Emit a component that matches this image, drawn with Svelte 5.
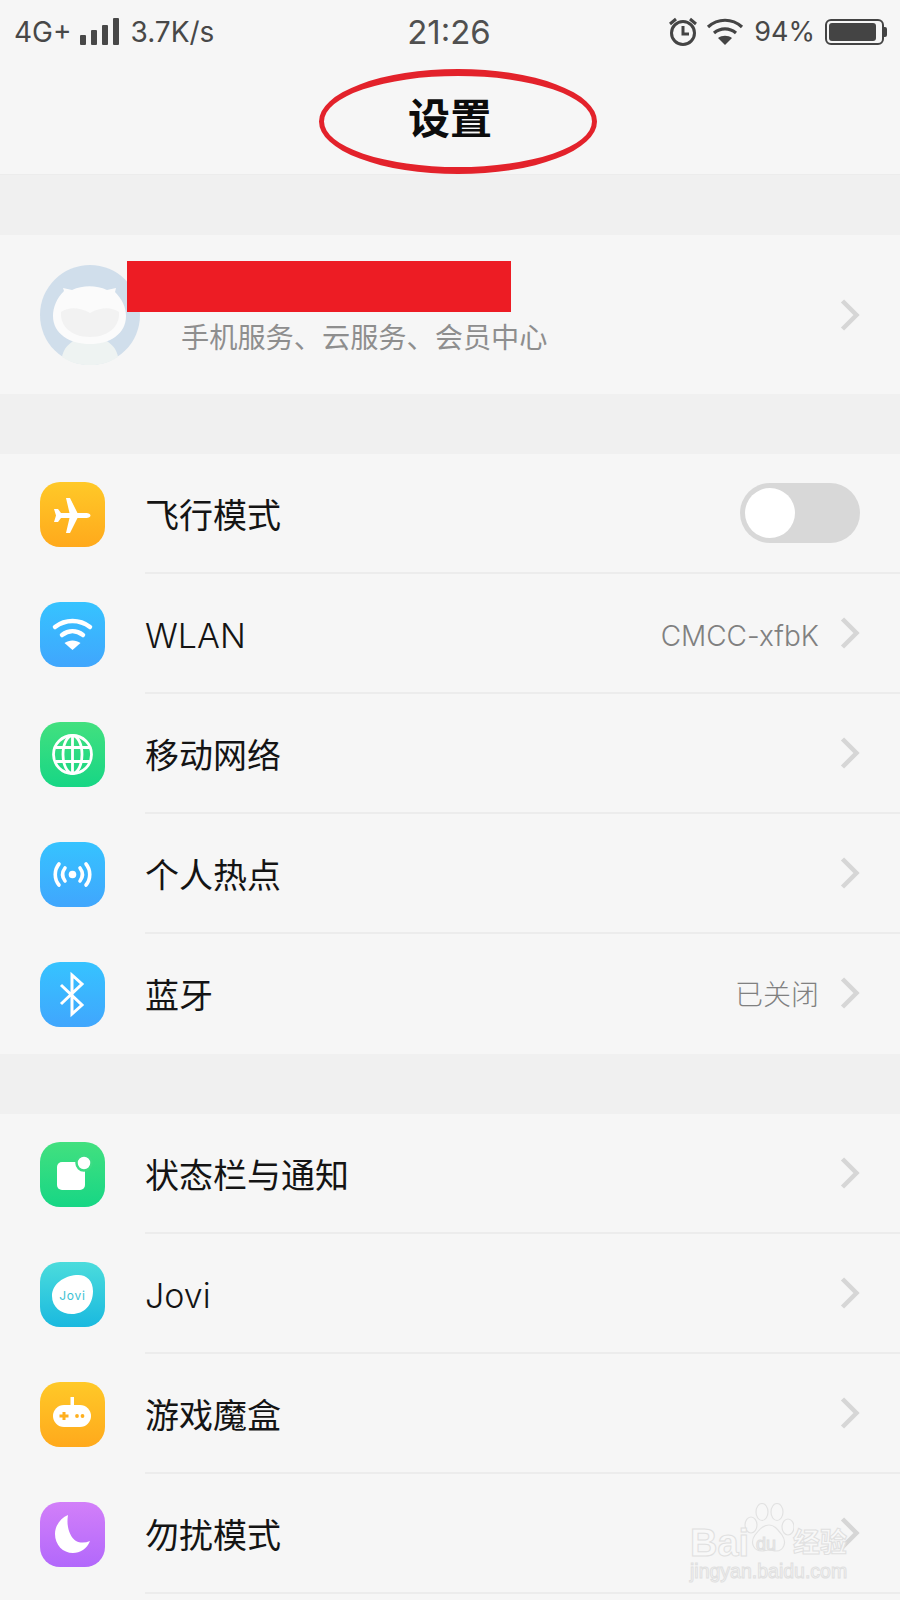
<script lang="ts">
  const group1 = [
    { id: 'plane', label: '飞行模式', toggle: true },
    { id: 'wifi', label: 'WLAN', value: 'CMCC-xfbK' },
    { id: 'globe', label: '移动网络' },
    { id: 'hotspot', label: '个人热点' },
    { id: 'bt', label: '蓝牙', value: '已关闭', end: true }
  ];
  const group2 = [
    { id: 'status', label: '状态栏与通知' },
    { id: 'jovi', label: 'Jovi' },
    { id: 'game', label: '游戏魔盒' },
    { id: 'moon', label: '勿扰模式' }
  ];
  const tones: Record<string, string> = {
    plane: 'orange',
    wifi: 'blue',
    globe: 'green',
    hotspot: 'blue',
    bt: 'blue',
    status: 'green',
    jovi: 'teal',
    game: 'orange',
    moon: 'purple'
  };
  // Inter sits higher in the line than the CJK face, nudge latin strings down
  const isLatin = (s: string) => /^[A-Za-z]/.test(s);
</script>

{#snippet glyph(id: string)}
  <svg viewBox="0 0 65 65" width="65" height="65" aria-hidden="true">
    {#if id === 'plane'}
      <path fill="#fff" d="M50.500 33.500c0 1.500-2 2.500-4 2.500H37.500L30 51h-4l3.500-15H21l-3 4h-4l2-6.500-2-6.500h4l3 4h8.500L26 16h4l7.500 15h9c2 0 4 1 4 2.500z"/>
    {:else if id === 'wifi'}
      <g fill="none" stroke="#fff" stroke-width="4.500" stroke-linecap="round">
        <path d="M15 25c10.500-8 24.500-8 35 0"/>
        <path d="M22 33c6.500-5 14.500-5 21 0"/>
      </g>
      <path fill="#fff" d="M32.500 48l-8-7c4.500-3.500 11.500-3.500 16 0z"/>
    {:else if id === 'globe'}
      <g fill="none" stroke="#fff" stroke-width="2.800">
        <circle cx="32.500" cy="32.500" r="19"/>
        <ellipse cx="32.500" cy="32.500" rx="9.500" ry="19"/>
        <path d="M32.500 13.500v38M15.500 25.500h34M15.500 39.500h34"/>
      </g>
    {:else if id === 'hotspot'}
      <g fill="none" stroke="#fff" stroke-width="3.600" stroke-linecap="round">
        <path d="M19 22c-5 6-5 15 0 21"/>
        <path d="M25 26c-3 4-3 9 0 13"/>
        <path d="M46 22c5 6 5 15 0 21"/>
        <path d="M40 26c3 4 3 9 0 13"/>
      </g>
      <circle cx="32.500" cy="32.500" r="3.800" fill="#fff"/>
    {:else if id === 'bt'}
      <path fill="none" stroke="#fff" stroke-width="3" d="M21 23l21 20-10 9V13l10 9-21 20"/>
    {:else if id === 'status'}
      <rect x="17" y="20" width="28" height="28" rx="5" fill="#fff"/>
      <circle cx="44" cy="21" r="7.500" fill="#fff" stroke="#3ddc84" stroke-width="2.500"/>
    {:else if id === 'jovi'}
      <path fill="#fff" d="M12 34c0-12 12-20 24-21 10-1 17 5 17 16 0 14-9 23-21 23-11 0-20-7-20-18z"/>
      <text x="32.500" y="38" class="jovi-mark">Jovi</text>
    {:else if id === 'game'}
      <path fill="#fff" d="M30.500 15h3.500v10h-3.500z"/>
      <rect x="13" y="23" width="38" height="22" rx="11" fill="#fff"/>
      <path fill="#ffb01f" d="M22.500 30h3v2.500h3v3h-3v2.500h-3v-2.500h-3v-3h3z"/>
      <circle cx="37" cy="34" r="1.900" fill="#ffb01f"/>
      <circle cx="42.500" cy="34" r="1.900" fill="#ffb01f"/>
    {:else if id === 'moon'}
      <path fill="#fff" d="M28 13c-2 12 2 22 8 26 4 2 9 2 14 0-3 8-10 12-17 12-10 0-18-8-18-19 0-9 6-16 13-19z"/>
    {/if}
  </svg>
{/snippet}

{#snippet chevron()}
  <svg class="chevron" viewBox="0 0 20 32" width="20" height="32" aria-hidden="true">
    <path d="M2.500 2l14 14-14 14" fill="none" stroke="#d6d6d6" stroke-width="4.500"/>
  </svg>
{/snippet}

{#snippet rows(items: any[])}
  <div class="group">
    {#each items as item}
      <div class="row">
        <div class="icon {tones[item.id]}">{@render glyph(item.id)}</div>
        <div class="row-body" class:end={item.end}>
          <span class="label" class:latin={isLatin(item.label)}>{item.label}</span>
          {#if item.toggle}
            <div class="toggle"><span class="knob"></span></div>
          {:else}
            {#if item.value}<span class="value" class:latin={isLatin(item.value)}>{item.value}</span>{/if}
            {@render chevron()}
          {/if}
        </div>
      </div>
    {/each}
  </div>
{/snippet}

<div class="page">
  <header class="status">
    <div class="status-left">
      <span class="net">4G+</span>
      <div class="signal"><i></i><i></i><i></i><i></i></div>
      <span class="speed">3.7K/s</span>
    </div>
    <span class="clock">21:26</span>
    <div class="status-right">
      <svg width="30" height="29" viewBox="0 0 30 29" aria-hidden="true">
        <g fill="none" stroke="#444" stroke-width="3">
          <circle cx="15" cy="16" r="11.500"/>
          <path d="M15 9v8h6"/>
          <path d="M2 7l6-5M28 7l-6-5"/>
        </g>
      </svg>
      <svg class="st-wifi" width="38" height="27" viewBox="0 0 38 27" aria-hidden="true">
        <g fill="none" stroke="#444" stroke-width="3.200">
          <path d="M2 9c10-9 24-9 34 0"/>
          <path d="M8 15c6.500-5.500 15.500-5.500 22 0"/>
        </g>
        <path fill="#444" d="M19 27l-7-7c4-3 10-3 14 0z"/>
      </svg>
      <span class="pct">94%</span>
      <div class="battery"><span class="fill"></span></div>
    </div>
  </header>

  <div class="title-bar">
    <h1>设置</h1>
  </div>

  <div class="band first"></div>

  <section class="profile">
    <svg class="avatar" viewBox="0 0 100 100" width="100" height="100" aria-hidden="true">
      <circle cx="50" cy="50" r="50" fill="#d0deeb"/>
      <path fill="#eef3f2" d="M22 92c2-12 13-20 28-20s26 8 28 20c-16 11-40 11-56 0z"/>
      <path fill="#fbfbfb" d="M24 26l-1-3 9 2c11-5 24-5 35 0l9-2-1 4c7 7 11 15 11 24 0 18-16 28-36 28S13 69 13 51c0-9 4-18 11-25z"/>
      <path fill="#f2f2f2" d="M21 47c8-5 18-5 29 1 11-6 21-6 29-1 1 14-10 25-29 25S20 61 21 47z"/>
    </svg>
    <div class="profile-text">手机服务、云服务、会员中心</div>
    {@render chevron()}
    <div class="redact"></div>
  </section>

  <div class="band"></div>

  {@render rows(group1)}

  <div class="band"></div>

  {@render rows(group2)}

  <div class="circle-mark"></div>

  <div class="watermark">
    <svg class="paw" viewBox="0 0 50 52" width="50" height="52" aria-hidden="true">
      <g fill="#f7f7f7" stroke="#e2e2e2" stroke-width="1.200">
        <ellipse cx="7" cy="22" rx="6" ry="8"/>
        <ellipse cx="18" cy="9" rx="6" ry="8.500"/>
        <ellipse cx="33" cy="9" rx="6" ry="8.500"/>
        <ellipse cx="44" cy="24" rx="6" ry="8"/>
        <path d="M25 22c6 0 9 5 13 10 5 7 2 16-6 16-3 0-4-1-7-1s-4 1-7 1c-9 0-12-9-7-16 4-5 8-10 14-10z"/>
      </g>
    </svg>
    <span class="wm-bai">Bai</span>
    <span class="wm-du">du</span>
    <span class="wm-cn">经验</span>
    <span class="wm-url">jingyan.baidu.com</span>
  </div>
</div>

<style>
  :global(body) {
    background: #f6f6f6;
  }
  .page {
    position: relative;
    width: 900px;
    height: 1600px;
    overflow: hidden;
    background: #f6f6f6;
    font-family: Inter, "Noto Sans CJK SC", sans-serif;
    color: #111;
  }
  .status {
    height: 63px;
    display: grid;
    grid-template-columns: 1fr auto 1fr;
    align-items: center;
    padding: 0 16px 0 14px;
    color: #484848;
    font-size: 28px;
  }
  .status-left,
  .status-right {
    display: flex;
    align-items: center;
  }
  .status-right {
    justify-content: flex-end;
  }
  .net {
    font-size: 28px;
  }
  .signal {
    display: flex;
    align-items: flex-end;
    gap: 5px;
    height: 27px;
    margin: 0 12px 0 8px;
  }
  .signal i {
    width: 6px;
    background: #484848;
    border-radius: 1px;
  }
  .signal i:nth-child(1) { height: 10px; }
  .signal i:nth-child(2) { height: 15px; }
  .signal i:nth-child(3) { height: 20px; }
  .signal i:nth-child(4) { height: 27px; }
  .clock {
    font-size: 33px;
    color: #505050;
  }
  .st-wifi {
    margin-left: 8px;
  }
  .pct {
    margin: 0 10px;
    font-size: 27px;
  }
  .battery {
    position: relative;
    box-sizing: border-box;
    width: 59px;
    height: 26px;
    border: 2px solid #444;
    border-radius: 6px;
    padding: 2px;
  }
  .battery::after {
    content: "";
    position: absolute;
    right: -5px;
    top: 6px;
    width: 3px;
    height: 10px;
    background: #444;
    border-radius: 0 2px 2px 0;
  }
  .fill {
    display: block;
    width: 92%;
    height: 100%;
    background: #444;
    border-radius: 3px;
  }
  .title-bar {
    height: 111px;
    display: flex;
    justify-content: center;
    align-items: flex-start;
  }
  h1 {
    margin: 29px 0 0;
    font-size: 42px;
    line-height: 48px;
    font-weight: 700;
    color: #0c0c0c;
    font-family: "Noto Sans CJK SC", sans-serif;
  }
  .band {
    height: 60px;
    background: #f0f0f0;
  }
  .band.first {
    height: 61px;
    border-top: 1px solid #ececec;
    box-sizing: border-box;
  }
  .profile {
    position: relative;
    height: 159px;
    display: flex;
    align-items: center;
    padding: 0 40px;
    box-sizing: border-box;
  }
  .avatar {
    flex: none;
  }
  .profile-text {
    flex: 1;
    margin: 42px 0 0 41px;
    font-size: 28.200px;
    line-height: 38px;
    color: #8e8e8e;
    font-family: "Noto Sans CJK SC", sans-serif;
  }
  .redact {
    position: absolute;
    left: 127px;
    top: 26px;
    width: 384px;
    height: 51px;
    background: #ed1c24;
  }
  .group {
    display: flex;
    flex-direction: column;
  }
  .row {
    height: 120px;
    display: flex;
    align-items: center;
    padding-left: 40px;
  }
  .icon {
    flex: none;
    width: 65px;
    height: 65px;
    border-radius: 20px;
    margin-right: 40px;
  }
  .icon svg {
    display: block;
  }
  .orange { background: linear-gradient(#ffc928, #ffa91c); }
  .blue { background: linear-gradient(#36c3ff, #40a6fd); }
  .green { background: linear-gradient(#42e07f, #17d685); }
  .teal { background: linear-gradient(#4bdcdc, #1ab9df); }
  .purple { background: linear-gradient(#d27ff9, #b268fb); }
  .row-body {
    flex: 1;
    align-self: stretch;
    display: flex;
    align-items: center;
    padding-right: 40px;
    border-bottom: 2px solid #ececec;
    box-sizing: border-box;
  }
  .row-body.end {
    border-bottom-color: transparent;
  }
  .label {
    flex: 1;
    font-size: 34px;
    color: #141414;
  }
  .value {
    margin-right: 21px;
    font-size: 28px;
    font-weight: 300;
    color: #808080;
  }
  .latin {
    padding-top: 5px;
  }
  .label.latin {
    font-weight: 300;
  }
  .chevron {
    flex: none;
    display: block;
  }
  .toggle {
    box-sizing: border-box;
    width: 120px;
    height: 60px;
    padding: 5px;
    border-radius: 30px;
    background: #d8d8d8;
  }
  .knob {
    display: block;
    width: 50px;
    height: 50px;
    border-radius: 50%;
    background: #fff;
  }
  .jovi-mark {
    font-size: 12px;
    fill: #3cc2d3;
    text-anchor: middle;
    letter-spacing: 0.800px;
  }
  /* hand-drawn annotation over the title */
  .circle-mark {
    position: absolute;
    left: 319px;
    top: 69px;
    width: 278px;
    height: 105px;
    box-sizing: border-box;
    border: solid #e3222b;
    border-width: 7px 5px;
    border-radius: 50%;
  }
  /* image-host stamp in the corner */
  .watermark {
    position: absolute;
    left: 690px;
    top: 1503px;
    width: 170px;
    height: 78px;
    font-family: "Liberation Sans", sans-serif;
    color: #f8f8f8;
    -webkit-text-stroke: 1px #e0e0e0;
  }
  .paw {
    position: absolute;
    left: 54px;
    top: 0;
  }
  .watermark span {
    position: absolute;
    line-height: 1;
  }
  .wm-bai {
    left: 0;
    top: 21px;
    font-size: 38px;
    font-weight: 700;
  }
  .wm-du {
    left: 66px;
    top: 32px;
    font-size: 18px;
    color: #f0f0f0;
  }
  .wm-cn {
    left: 103px;
    top: 24px;
    font-size: 27px;
    font-weight: 700;
    font-family: "Noto Sans CJK SC", sans-serif;
  }
  .wm-url {
    left: 0;
    top: 59px;
    font-size: 19.500px;
    color: #f8f8f8;
  }
</style>
